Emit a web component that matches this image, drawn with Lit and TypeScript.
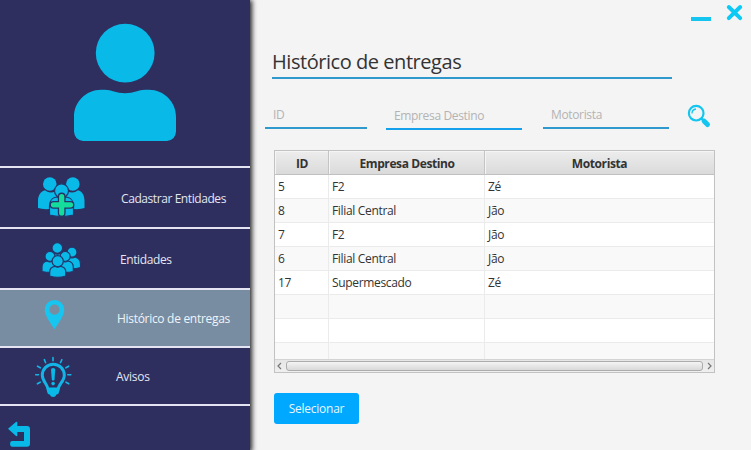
import { LitElement, html, svg, css } from "lit";
import { customElement, property, state } from "lit/decorators.js";
import { classMap } from "lit/directives/class-map.js";

const addPeople = svg`
  <g class="fill">
    <circle cx="49.8" cy="184" r="6.8"/><circle cx="72.8" cy="184" r="6.8"/>
    <path d="M38 208V201C38 195 41 191.5 45 190.3Q50 194.5 56 191L60 197V209H50Q42 209.500 38 208Z"/>
    <path d="M84.500 208V201C84.500 195 82 191.500 78 190.300Q73 194.500 67 191L63 197V209H73Q81 209.500 84.500 208Z"/>
  </g>
  <circle class="fill outline" cx="61.500" cy="190.800" r="7"/>
  <path class="fill outline" d="M49.500 215V206C49.500 200 53 197.200 57 197Q61.500 200 66 197C70 197.200 73.500 200 73.500 206V215Q61.500 218 49.500 215Z"/>
  <path class="plus-edge" d="M61.700 196.500V213M53.500 204.800H70.500"/>
  <path class="plus" d="M61.700 196.500V213M53.500 204.800H70.500"/>`;

const group = svg`
  <g class="fill outline">
    <circle cx="57.300" cy="248" r="5.300"/>
    <path d="M49 264Q48 254 54 253.500Q57.500 255 61 253.500Q67 254 66 264Z"/>
    <circle cx="72" cy="252.200" r="5"/>
    <path d="M64 268V263Q64 258 69 257Q72 259 75 257Q80.500 258.500 80.500 264V267.500Q73 270 64 268Z"/>
    <circle cx="50" cy="256.400" r="5"/>
    <path d="M42 271.500V267Q42 262 47 261Q50 263 53 261Q58 262 58 267V272Q49 273 42 271.500Z"/>
    <circle cx="65.200" cy="256.400" r="5"/>
    <path d="M57.500 272V267Q57.500 262 62 261Q65 263 68 261Q73.300 262 73.300 267V271.500Q67 273 57.500 272Z"/>
    <circle cx="57.700" cy="261.200" r="5.600"/>
    <path d="M49.700 276V272Q49.700 267 55 266.300Q57.700 268 60.500 266.300Q65.800 267 65.800 272V276Q57.700 278.500 49.700 276Z"/>
  </g>`;

const pin = svg`<path class="bright" fill-rule="evenodd" d="M54.500 300A9.800 9.800 0 0 0 44.700 309.800C44.700 315 49.500 322 54.500 329.200C59.500 322 64.300 315 64.300 309.800A9.800 9.800 0 0 0 54.500 300ZM54.500 304.600A5.100 5.100 0 1 1 54.500 314.800A5.100 5.100 0 0 1 54.500 304.600Z"/>`;

const bulb = svg`
  <path class="line" stroke-width="3" d="M48 389.500C48 384.500 42.300 381.500 42.300 375.200A11 11 0 0 1 64.300 375.200C64.300 381.500 58.200 384.500 58.200 389.500"/>
  <path class="fill" d="M47 387.500H59.200V391.500Q59 394 56.500 394.500Q55.500 397 53.100 397T49.700 394.500Q47.200 394 47 391.500Z"/>
  <path class="fill" d="M51 369.500Q51 368 53.100 368T55.200 369.500L54.500 380Q53.100 381 51.800 380Z"/>
  <circle class="fill" cx="53.100" cy="383.600" r="1.800"/>
  <path class="line" stroke-width="1.600" d="M53 357.500V360.800M44.300 359.700L45.600 362.600M61.900 359.700L60.500 362.600M37.500 366.200L40.300 367.800M68.700 366.200L65.900 367.800M35.700 374.800H38.500M67.800 374.800H70.800M37.400 383.800L40.200 382.200M68.800 383.800L66 382.200"/>`;

interface MenuEntry { id: string; label: string; top: number; height: number; icon: unknown; }

const MENU: MenuEntry[] = [
  { id: "add", label: "Cadastrar Entidades", top: 168, height: 59, icon: addPeople },
  { id: "entities", label: "Entidades", top: 229, height: 59, icon: group },
  { id: "history", label: "Histórico de entregas", top: 290, height: 56, icon: pin },
  { id: "alerts", label: "Avisos", top: 348, height: 56, icon: bulb },
];

@customElement("side-menu")
class SideMenu extends LitElement {
  @property() active = "history";

  static styles = css`
    :host { display: flex; flex-direction: column; width: 250px; height: 450px; flex: none; background: #2e2e5f; box-shadow: 1px 1px 5px 1px #222; position: relative; z-index: 1; }
    svg { display: block; flex: none; }
    .avatar { height: 166px; border-bottom: 2px solid #e4e4f2; }
    .entry { display: flex; align-items: center; border-bottom: 2px solid #e4e4f2; color: #e2e6f2; font-size: 12px; white-space: nowrap; }
    .tall { height: 59px; }
    .short { height: 56px; }
    .selected { background: #788da1; color: #eef4fa; }
    .label { margin-top: 1px; }
    .add .label { padding-left: 5px; letter-spacing: -0.42px; }
    .entities .label { padding-left: 4px; letter-spacing: -0.4px; }
    .history .label { padding-left: 1px; letter-spacing: -0.3px; }
    .alerts .label { letter-spacing: -0.25px; }
    .fill { fill: #09b9e8; }
    .bright { fill: #16c5f0; }
    .outline { stroke: #26356a; stroke-width: 1.200; }
    .line { fill: none; stroke: #12b5e5; stroke-linecap: round; }
    .plus { stroke: #14dc9c; stroke-width: 5.200; stroke-linecap: round; fill: none; }
    .plus-edge { stroke: #263263; stroke-width: 7.800; stroke-linecap: round; fill: none; }
  `;

  render() {
    return html`
      <div class="avatar">
        <svg width="250" height="166" viewBox="0 0 250 166">
          <circle class="fill" cx="125.200" cy="53.100" r="29.400"/>
          <path class="fill" d="M74 117C74 102 86 89.800 101 89.800C106 89.800 110 90.200 113 91.300Q125 95.200 137 91.300C140 90.200 144 89.800 149 89.800C164 89.800 176 102 176 117V131.500Q175.500 140 167 141H83Q74.500 140 74 131.500Z"/>
        </svg>
      </div>
      ${MENU.map((m) => html`
        <div class=${classMap({ entry: true, [m.id]: true, tall: m.height === 59, short: m.height === 56, selected: m.id === this.active })}>
          <svg width="116" height=${m.height} viewBox="0 ${m.top} 116 ${m.height}">${m.icon}</svg>
          <span class="label">${m.label}</span>
        </div>`)}
      <svg width="60" height="44" viewBox="0 406 60 44">
        <path class="fill" d="M8 428.800L16.200 421.800Q17.300 421.700 17.300 423V426H27Q30 426 30 429V443.500Q30 446.700 27 446.700H12Q10 446.500 10 443.800T12 441H24V432H17.300V435.500Q17 436.500 16 436Z"/>
      </svg>`;
  }
}

@customElement("delivery-table")
class DeliveryTable extends LitElement {
  @state() rows: string[][] = [
    ["5", "F2", "Zé"], ["8", "Filial Central", "Jão"], ["7", "F2", "Jão"],
    ["6", "Filial Central", "Jão"], ["17", "Supermescado", "Zé"],
    ["", "", ""], ["", "", ""], ["", "", ""],
  ];

  static styles = css`
    :host { display: flex; flex-direction: column; box-sizing: border-box; width: 441px; height: 223px; border: 1px solid #c2c2c2; background: #fff; color: #333; font-size: 12px; }
    .row, .head { display: grid; grid-template-columns: 54px 156px 229px; }
    .head { height: 24px; flex: none; font-weight: 700; text-align: center; line-height: 25px; }
    .head span { box-sizing: border-box; height: 24px; background: linear-gradient(#ededed, #dadada); border-right: 1px solid #c4c4c4; border-bottom: 1px solid #c0c0c0; box-shadow: inset 1px 1px #f5f5f5; letter-spacing: -0.4px; }
    .head span:first-child { padding-left: 1px; }
    .head span:nth-child(2) { padding-left: 1px; }
    .head span:last-child { border-right: 0; letter-spacing: -0.4px; }
    .body { height: 184px; overflow: hidden; }
    .row { height: 24px; line-height: 24px; }
    .row:nth-child(even) { background: #f9f9f9; }
    .row span { height: 24px; border-right: 1px solid #ebebeb; border-bottom: 1px solid #ebebeb; padding-left: 3px; letter-spacing: -0.33px; box-sizing: border-box; }
    .row span:last-child { border-right: 0; }
    .scroll { height: 13px; display: flex; align-items: center; background: linear-gradient(#d4d4d4 1px, #e6e6e6 1px, #efefef); }
    .thumb { box-sizing: border-box; width: 417px; height: 10px; margin-top: 1px; border: 1px solid #acacac; border-radius: 3px; background: linear-gradient(#f4f4f4, #d9d9d9); }
    svg { display: block; width: 11px; height: 13px; fill: none; stroke: #777; stroke-width: 1.200; }
  `;

  render() {
    return html`
      <div class="head"><span>ID</span><span>Empresa Destino</span><span>Motorista</span></div>
      <div class="body">${this.rows.map((r) => html`<div class="row">${r.map((c) => html`<span>${c}</span>`)}</div>`)}</div>
      <div class="scroll">
        <svg viewBox="0 0 11 13"><path d="M6 4L3 7L6 10"/></svg>
        <div class="thumb"></div>
        <svg viewBox="0 0 11 13"><path d="M5 4L8 7L5 10"/></svg>
      </div>`;
  }
}

@customElement("app-root")
class AppRoot extends LitElement {
  static styles = css`
    :host { display: flex; width: 751px; height: 450px; overflow: hidden; background: #f4f4f4; font-family: "Open Sans", "Noto Sans", sans-serif; }
    main { width: 501px; display: flex; flex-direction: column; }
    svg { display: block; }
    .window { display: flex; justify-content: flex-end; height: 46px; }
    h1 { box-sizing: border-box; width: 400px; height: 33px; margin: 0 0 0 22px; border-bottom: 2px solid #2f98cd; font-size: 20px; font-weight: 370; line-height: 32px; color: #333; letter-spacing: -0.45px; white-space: nowrap; }
    .filters { display: flex; align-items: flex-start; height: 71px; padding: 0 0 0 15px; }
    input { box-sizing: border-box; height: 28px; margin: 22px 0 0; padding: 0 8px; border: 0; border-bottom: 2px solid #2f98cd; border-radius: 0; outline: 0; background: transparent; font: 12px "Open Sans", "Noto Sans", sans-serif; letter-spacing: -0.35px; color: #333; }
    input::placeholder { color: #b3b3b3; opacity: 1; }
    .code { width: 102px; }
    .company { width: 136px; margin: 23px 21px 0 19px; border-color: #14a0ea; }
    .driver { width: 126px; margin-right: 15px; }
    delivery-table { margin-left: 24px; }
    button { width: 85px; height: 31px; margin: 20px 0 0 24px; padding: 0; border: 0; border-radius: 3px; background: #00a8ff; color: #e8f7ff; font: 12px "Open Sans", "Noto Sans", sans-serif; letter-spacing: -0.25px; }
    .cyan { fill: none; stroke: #14c6ef; }
    .handle { stroke: #14c6ef; stroke-width: 5; stroke-linecap: round; }
    .close { stroke: #0cc9f5; stroke-width: 3.900; stroke-linecap: round; }
    .bar { fill: #14c6ef; }
  `;

  render() {
    return html`
      <side-menu active="history"></side-menu>
      <main>
        <div class="window">
          <svg width="71" height="46" viewBox="680 0 71 46">
            <rect class="bar" x="691" y="17" width="20" height="4"/>
            <path class="close" d="M728.800 7L740.200 18.200M740.200 7L728.800 18.200"/>
          </svg>
        </div>
        <h1>Histórico de entregas</h1>
        <div class="filters">
          <input class="code" placeholder="ID">
          <input class="company" placeholder="Empresa Destino">
          <input class="driver" placeholder="Motorista">
          <svg width="30" height="50" viewBox="684 79 30 50">
            <circle class="cyan" cx="696.200" cy="113.200" r="7.300" stroke-width="2.200"/>
            <path class="cyan" stroke-width="1.300" d="M692 113.500Q692 109.500 696 109"/>
            <path class="cyan" stroke-width="2.500" d="M701.500 118.500L704 121"/>
            <path class="handle" d="M704.200 121.200L707.500 124.500"/>
          </svg>
        </div>
        <delivery-table></delivery-table>
        <button>Selecionar</button>
      </main>`;
  }
}
